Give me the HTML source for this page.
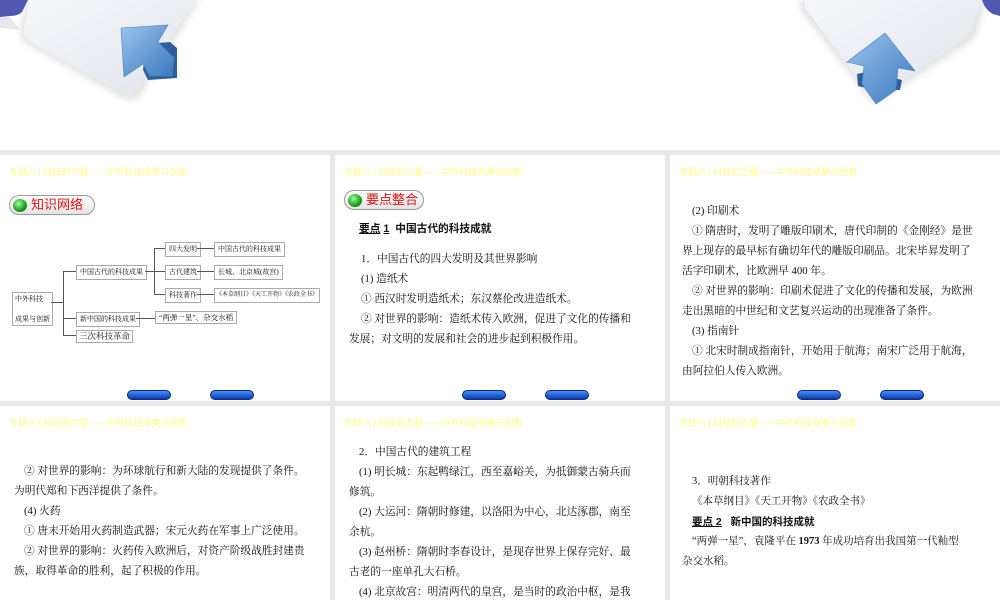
<!DOCTYPE html>
<html><head><meta charset="utf-8"><style>
*{margin:0;padding:0;box-sizing:border-box}
body{width:1000px;height:600px;background:#e8e8e8;position:relative;overflow:hidden;font-family:"Liberation Serif","Noto Serif CJK SC",serif;color:#111}
.top{position:absolute;left:0;top:0;width:1000px;height:150px;background:#fff}
.p{position:absolute;background:#fff;overflow:hidden}
.h{position:absolute;left:9px;top:10px;font-size:9px;color:#ffff88;font-family:"Liberation Sans","Noto Sans CJK SC",sans-serif}
.t{position:absolute;font-size:10.7px;line-height:20px;white-space:nowrap}
.b{font-weight:bold;font-family:"Liberation Sans","Noto Sans CJK SC",sans-serif}
.btn{position:absolute;width:44px;height:10px;border-radius:6px;background:linear-gradient(#4a8cff,#0a3aa8);border:1px solid #062a80}
.tag{position:absolute;height:20px;border:1px solid #999;border-radius:10px;background:linear-gradient(#fff,#e4e4e4);font-family:"Liberation Sans","Noto Sans CJK SC",sans-serif;color:#e01010;font-size:13px;line-height:18px;padding-left:21px}
.tag:before{content:"";position:absolute;left:3px;top:3px;width:14px;height:13px;border-radius:50%;background:radial-gradient(circle at 40% 35%,#9f9,#1a9a1a 60%,#0a6a0a)}
.bx{position:absolute;border:1px solid #aaa;font-size:8px;line-height:13px;padding:0 3px;white-space:nowrap;background:#fff}
.ln{position:absolute;background:#555}
</style></head><body>
<div class="top">
<svg width="1000" height="150" style="position:absolute;left:0;top:0">
<defs><linearGradient id="g" x1="0" y1="0" x2="1" y2="1"><stop offset="0" stop-color="#f4f6f9"/><stop offset="1" stop-color="#e2e6ec"/></linearGradient>
<linearGradient id="a" x1="0" y1="0" x2="1" y2="1"><stop offset="0" stop-color="#9cc4ee"/><stop offset="1" stop-color="#3a78bd"/></linearGradient>
<filter id="s"><feGaussianBlur stdDeviation="3"/></filter></defs>
<path d="M28 0 L200 0 L140 96 Q132 104 122 98 L28 45 Q18 38 20 28 Z" fill="#ccc" opacity=".5" filter="url(#s)"/>
<path d="M30 0 L196 0 L136 90 Q130 97 122 93 L30 42 Q22 37 24 28 Z" fill="url(#g)"/>
<path d="M0 0 L28 0 L22 12 Q18 16 10 16 L0 17Z" fill="#5058b0"/>
<path d="M0 17 L10 17 L20 30 L0 28Z" fill="#e8e8ec"/>
<path d="M146 44 L170 42 L177 48 L177 78 L148 80 L143 70 Z" fill="#2f5f9a"/>
<path d="M121 28 L168 25 L158 42 L174 58 L172 76 L150 76 L143 64 L124 77 Z" fill="url(#a)" stroke="#4a7fbf" stroke-width=".6"/>
<path d="M800 0 L985 0 L978 32 Q974 40 966 45 L882 100 Q874 106 868 98 L800 10 Z" fill="#ccc" opacity=".5" filter="url(#s)"/>
<path d="M805 0 L980 0 L972 30 Q968 37 960 42 L880 96 Q874 100 870 94 L805 8 Z" fill="url(#g)"/>
<path d="M982 0 L1000 0 L1000 16 L993 14 Q985 10 982 0Z" fill="#5058b0"/>
<path d="M857 74 L866 72 L866 88 L858 86 Z" fill="#2f5f9a"/>
<path d="M894 78 L902 80 L900 90 L893 90 Z" fill="#2f5f9a"/>
<path d="M885 33 L915 71 L898 68 L896 90 L876 104 L862 84 L864 66 L847 62 Z" fill="url(#a)" stroke="#4a7fbf" stroke-width=".6"/>
</svg>
</div>

<!-- Panel 1 -->
<div class="p" style="left:0;top:155px;width:330px;height:246px">
<div class="h">专题六 | 科技的力量——中外科技成果与创新</div>
<div class="tag" style="left:9px;top:40px;width:86px">知识网络</div>
<div class="bx" style="left:12px;top:137px;line-height:10px;padding:1px 2px;font-size:7px">中外科技<br><br>成果与创新</div>
<div class="ln" style="left:51px;top:147px;width:13px;height:1px"></div>
<div class="ln" style="left:63px;top:116px;width:1px;height:65px"></div>
<div class="ln" style="left:63px;top:116px;width:14px;height:1px"></div>
<div class="ln" style="left:63px;top:163px;width:14px;height:1px"></div>
<div class="ln" style="left:63px;top:180px;width:14px;height:1px"></div>
<div class="bx" style="left:76px;top:110px;font-size:7px">中国古代的科技成果</div>
<div class="ln" style="left:145px;top:116px;width:10px;height:1px"></div>
<div class="ln" style="left:154px;top:93px;width:1px;height:46px"></div>
<div class="ln" style="left:154px;top:93px;width:12px;height:1px"></div>
<div class="ln" style="left:154px;top:116px;width:12px;height:1px"></div>
<div class="ln" style="left:154px;top:139px;width:12px;height:1px"></div>
<div class="bx" style="left:165px;top:87px;font-size:7px">四大发明</div>
<div class="bx" style="left:165px;top:110px;font-size:7px">古代建筑</div>
<div class="bx" style="left:165px;top:133px;font-size:7px">科技著作</div>
<div class="ln" style="left:197px;top:93px;width:18px;height:1px"></div>
<div class="ln" style="left:197px;top:116px;width:18px;height:1px"></div>
<div class="ln" style="left:197px;top:139px;width:18px;height:1px"></div>
<div class="bx" style="left:214px;top:87px;font-size:7px">中国古代的科技成果</div>
<div class="bx" style="left:214px;top:110px;font-size:7px">长城、北京城(故宫)</div>
<div class="bx" style="left:214px;top:133px;font-size:6px;padding:0 1px">《本草纲目》《天工开物》《农政全书》</div>
<div class="bx" style="left:76px;top:157px;font-size:7px">新中国的科技成果</div>
<div class="ln" style="left:136px;top:163px;width:20px;height:1px"></div>
<div class="bx" style="left:155px;top:156px;font-size:7.5px;line-height:11px">“两弹一星”、杂交水稻</div>
<div class="bx" style="left:76px;top:175px;font-size:8.5px;line-height:11px;padding:0 2px">三次科技革命</div>
<div class="btn" style="left:127px;top:235px"></div><div class="btn" style="left:210px;top:235px"></div>
</div>

<!-- Panel 2 -->
<div class="p" style="left:335px;top:155px;width:330px;height:246px">
<div class="h">专题六 | 科技的力量——中外科技成果与创新</div>
<div class="tag" style="left:9px;top:35px;width:80px">要点整合</div>
<div class="t b" style="left:24px;top:64px"><u>要点</u> <u>1</u>&nbsp;&nbsp;中国古代的科技成就</div>
<div class="t" style="left:26px;top:94px">1．中国古代的四大发明及其世界影响</div>
<div class="t" style="left:26px;top:114px">(1) 造纸术</div>
<div class="t" style="left:26px;top:134px">① 西汉时发明造纸术；东汉蔡伦改进造纸术。</div>
<div class="t" style="left:26px;top:154px">② 对世界的影响：造纸术传入欧洲，促进了文化的传播和</div>
<div class="t" style="left:14px;top:174px">发展；对文明的发展和社会的进步起到积极作用。</div>
<div class="btn" style="left:127px;top:235px"></div><div class="btn" style="left:210px;top:235px"></div>
</div>

<!-- Panel 3 -->
<div class="p" style="left:670px;top:155px;width:330px;height:246px">
<div class="h">专题六 | 科技的力量——中外科技成果与创新</div>
<div class="t" style="left:22px;top:46px">(2) 印刷术</div>
<div class="t" style="left:22px;top:66px">① 隋唐时，发明了雕版印刷术，唐代印制的《金刚经》是世</div>
<div class="t" style="left:12px;top:86px">界上现存的最早标有确切年代的雕版印刷品。北宋毕昇发明了</div>
<div class="t" style="left:12px;top:106px">活字印刷术，比欧洲早 400 年。</div>
<div class="t" style="left:22px;top:126px">② 对世界的影响：印刷术促进了文化的传播和发展，为欧洲</div>
<div class="t" style="left:12px;top:146px">走出黑暗的中世纪和文艺复兴运动的出现准备了条件。</div>
<div class="t" style="left:22px;top:166px">(3) 指南针</div>
<div class="t" style="left:22px;top:186px">① 北宋时制成指南针，开始用于航海；南宋广泛用于航海，</div>
<div class="t" style="left:12px;top:206px">由阿拉伯人传入欧洲。</div>
<div class="btn" style="left:127px;top:235px"></div><div class="btn" style="left:210px;top:235px"></div>
</div>

<!-- Panel 4 -->
<div class="p" style="left:0;top:406px;width:330px;height:194px">
<div class="h">专题六 | 科技的力量——中外科技成果与创新</div>
<div class="t" style="left:24px;top:55px">② 对世界的影响：为环球航行和新大陆的发现提供了条件。</div>
<div class="t" style="left:14px;top:75px">为明代郑和下西洋提供了条件。</div>
<div class="t" style="left:24px;top:95px">(4) 火药</div>
<div class="t" style="left:24px;top:115px">① 唐末开始用火药制造武器；宋元火药在军事上广泛使用。</div>
<div class="t" style="left:24px;top:135px">② 对世界的影响：火药传入欧洲后，对资产阶级战胜封建贵</div>
<div class="t" style="left:14px;top:155px">族，取得革命的胜利，起了积极的作用。</div>
</div>

<!-- Panel 5 -->
<div class="p" style="left:335px;top:406px;width:330px;height:194px">
<div class="h">专题六 | 科技的力量——中外科技成果与创新</div>
<div class="t" style="left:24px;top:36px">2．中国古代的建筑工程</div>
<div class="t" style="left:24px;top:56px">(1) 明长城：东起鸭绿江，西至嘉峪关，为抵御蒙古骑兵而</div>
<div class="t" style="left:14px;top:76px">修筑。</div>
<div class="t" style="left:24px;top:96px">(2) 大运河：隋朝时修建，以洛阳为中心，北达涿郡，南至</div>
<div class="t" style="left:14px;top:116px">余杭。</div>
<div class="t" style="left:24px;top:136px">(3) 赵州桥：隋朝时李春设计，是现存世界上保存完好、最</div>
<div class="t" style="left:14px;top:156px">古老的一座单孔大石桥。</div>
<div class="t" style="left:24px;top:176px">(4) 北京故宫：明清两代的皇宫，是当时的政治中枢，是我</div>
</div>

<!-- Panel 6 -->
<div class="p" style="left:670px;top:406px;width:330px;height:194px">
<div class="h">专题六 | 科技的力量——中外科技成果与创新</div>
<div class="t" style="left:22px;top:66px;font-size:10.5px">3．明朝科技著作</div>
<div class="t" style="left:22px;top:86px;font-size:10.5px">《本草纲目》《天工开物》《农政全书》</div>
<div class="t b" style="left:22px;top:106px;font-size:10.5px"><u>要点 2</u>&nbsp;&nbsp;&nbsp;新中国的科技成就</div>
<div class="t" style="left:22px;top:126px;font-size:10.5px">“两弹一星”，袁隆平在 <b>1973</b> 年成功培育出我国第一代籼型</div>
<div class="t" style="left:12px;top:146px;font-size:10.5px">杂交水稻。</div>
</div>
</body></html>
